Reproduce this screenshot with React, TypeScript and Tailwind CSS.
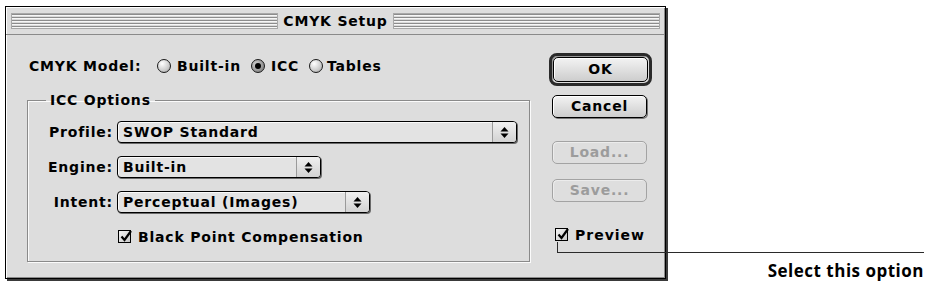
import type { ReactNode } from 'react';

const ui = "font-['DejaVu_Sans',sans-serif] font-bold text-[14px] tracking-[0.8px] text-black";

const Radio = ({ checked }: { checked?: boolean }) => (
  <span
    className={`w-[14px] h-[14px] shrink-0 rounded-full border border-[#1a1a1a] flex items-center justify-center ${
      checked
        ? 'bg-[radial-gradient(circle_at_35%_35%,#cfcfcf,#6f6f6f)]'
        : 'bg-[radial-gradient(circle_at_35%_30%,#ffffff,#c8c8c8_65%,#8f8f8f)]'
    }`}
  >
    {checked && <span className="w-[6px] h-[6px] rounded-full bg-black" />}
  </span>
);

const CheckBox = () => (
  <span className="relative w-[13px] h-[13px] shrink-0 border border-black bg-[linear-gradient(135deg,#f4f4f4,#c9c9c9)]">
    <svg width="15" height="14" viewBox="0 0 15 14" className="absolute -top-[2px] left-0">
      <path d="M2.5 7.5 L5.5 11 L12 2" fill="none" stroke="#000" strokeWidth="2.2" />
    </svg>
  </span>
);

const Arrows = () => (
  <svg width="9" height="13" viewBox="0 0 9 13">
    <polygon points="0.5,5.5 4.5,1 8.5,5.5" fill="#000" />
    <polygon points="0.5,7.5 8.5,7.5 4.5,12" fill="#000" />
  </svg>
);

const Popup = ({ width, children }: { width: string; children: ReactNode }) => (
  <div
    className={`${width} h-[22px] flex border border-black rounded-[4px] bg-[#e3e3e3] shadow-[1px_1px_0_#6a6a6a,inset_1px_1px_0_#fafafa]`}
  >
    <div className="flex-1 flex items-center pl-[5px] leading-none">{children}</div>
    <div className="w-[24px] flex items-center justify-center border-l border-[#9a9a9a] bg-[linear-gradient(#f0f0f0,#d2d2d2)] rounded-r-[3px]">
      <Arrows />
    </div>
  </div>
);

const PushButton = ({ label, disabled }: { label: string; disabled?: boolean }) => (
  <div
    className={`w-[95px] h-[23px] flex items-center justify-center rounded-[5px] border ${
      disabled
        ? 'border-[#a3a3a3] text-[#9c9c9c] bg-[#dedede] shadow-[inset_1px_1px_0_#ececec]'
        : 'border-black bg-[linear-gradient(#f3f3f3,#cdcdcd)] shadow-[1px_1px_0_#777,inset_1px_1px_0_#fff]'
    }`}
  >
    {label}
  </div>
);

const Row = ({ label, children }: { label: string; children: ReactNode }) => (
  <div className="flex items-center">
    <span className="w-[85px] text-right leading-none">{label}</span>
    <div className="ml-[4px]">{children}</div>
  </div>
);

export default function App() {
  return (
    <div className={`relative w-[928px] h-[284px] bg-white flex pt-[6px] pl-[5px] overflow-hidden ${ui}`}>
      {/* dialog window */}
      <div className="w-[661px] h-[273px] shrink-0 flex flex-col border border-black bg-[#dddddd] shadow-[inset_1px_1px_0_#fff,inset_-1px_-1px_0_#8a8a8a,2px_2px_0_#3a3a3a]">
        {/* title bar */}
        <div className="h-[28px] flex items-center px-[5px] border-b border-[#8a8a8a]">
          <div className="flex-1 h-[16px] border border-[#a8a8a8] bg-[repeating-linear-gradient(to_bottom,#8c8c8c_0px,#8c8c8c_1px,#f6f6f6_1px,#f6f6f6_2px,#d9d9d9_2px,#d9d9d9_3px)]" />
          <span className="px-[5px] leading-none">CMYK Setup</span>
          <div className="flex-1 h-[16px] border border-[#a8a8a8] bg-[repeating-linear-gradient(to_bottom,#8c8c8c_0px,#8c8c8c_1px,#f6f6f6_1px,#f6f6f6_2px,#d9d9d9_2px,#d9d9d9_3px)]" />
        </div>

        {/* body */}
        <div className="flex flex-1">
          <div className="ml-[21px] w-[503px] flex flex-col">
            <div className="mt-[21px] h-[20px] flex items-center leading-none">
              <span className="w-[130px] pl-[2px]">CMYK Model:</span>
              <div className="w-[94px] flex items-center gap-[6px]">
                <Radio />
                <span>Built-in</span>
              </div>
              <div className="w-[58px] flex items-center gap-[6px]">
                <Radio checked />
                <span>ICC</span>
              </div>
              <div className="flex items-center gap-[4px]">
                <Radio />
                <span>Tables</span>
              </div>
            </div>

            <fieldset className="mt-[16px] border border-[#8a8a8a] shadow-[1px_1px_0_#fbfbfb,inset_1px_1px_0_#fbfbfb] pb-[18px]">
              <legend className="ml-[18px] px-[4px] h-[16px] leading-[16px]">ICC Options</legend>
              <div className="mt-[13px] flex flex-col gap-[13px]">
                <Row label="Profile:">
                  <Popup width="w-[400px]">SWOP Standard</Popup>
                </Row>
                <Row label="Engine:">
                  <Popup width="w-[204px]">Built-in</Popup>
                </Row>
                <Row label="Intent:">
                  <Popup width="w-[253px]">Perceptual (Images)</Popup>
                </Row>
              </div>
              <div className="mt-[17px] h-[13px] pl-[90px] flex items-center gap-[7px] leading-none">
                <CheckBox />
                <span>Black Point Compensation</span>
              </div>
            </fieldset>
          </div>

          {/* buttons */}
          <div className="ml-[19px] flex flex-col">
            <div className="mt-[18px] w-[103px] h-[33px] rounded-[8px] border-[3px] border-[#2a2a2a] p-px shadow-[inset_1px_1px_0_#999]">
              <div className="w-full h-full flex items-center justify-center rounded-[5px] border border-black bg-[linear-gradient(#f3f3f3,#cdcdcd)] shadow-[inset_1px_1px_0_#fff]">
                OK
              </div>
            </div>
            <div className="ml-[3px] mt-[9px]">
              <PushButton label="Cancel" />
            </div>
            <div className="ml-[3px] mt-[23px]">
              <PushButton label="Load..." disabled />
            </div>
            <div className="ml-[3px] mt-[15px]">
              <PushButton label="Save..." disabled />
            </div>
            <div className="ml-[6px] mt-[26px] h-[13px] flex items-center gap-[7px] leading-none">
              <CheckBox />
              <span className="tracking-[1px]">Preview</span>
            </div>
          </div>
        </div>
      </div>

      {/* caption */}
      <div className="flex-1 flex justify-end pr-[4px]">
        <span className="mt-[253px] h-[23px] leading-[23px] font-['Open_Sans',sans-serif] text-[17px] font-bold tracking-[0.5px]">
          Select this option
        </span>
      </div>

      {/* callout line */}
      <div className="absolute left-[557px] top-[242px] w-px h-[11px] bg-[#2a2a2a]" />
      <div className="absolute left-[557px] top-[252px] w-[367px] h-px bg-[#2a2a2a]" />
    </div>
  );
}
